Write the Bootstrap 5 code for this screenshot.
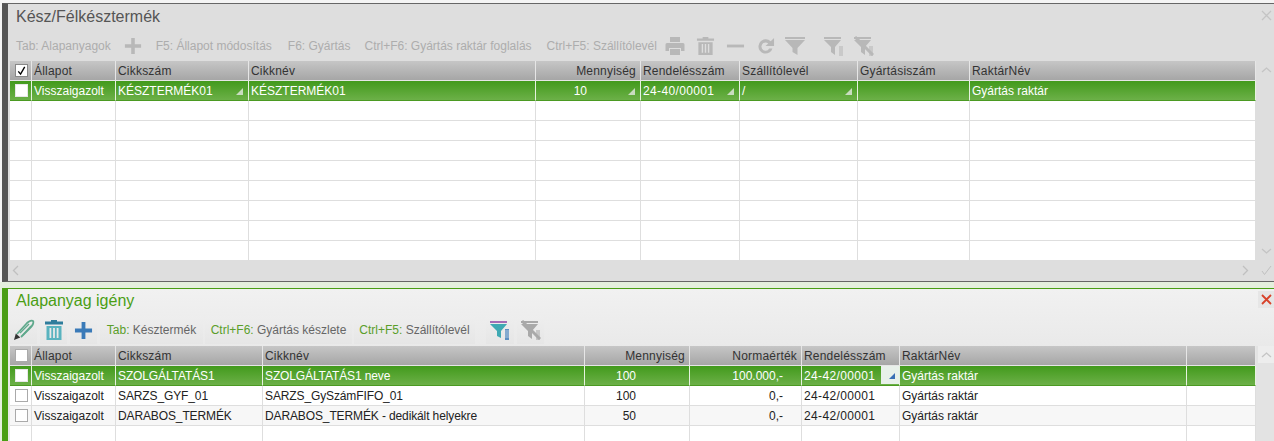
<!DOCTYPE html>
<html lang="hu">
<head>
<meta charset="utf-8">
<title>Gyártás</title>
<link href="https://cdn.jsdelivr.net/npm/bootstrap@5.3.0/dist/css/bootstrap.min.css" rel="stylesheet">
<style>
html,body{height:441px;overflow:hidden}
body{background:#f4f4f4;font-family:"Liberation Sans",Arial,sans-serif;font-size:12px;color:#333;padding-top:3px}
.pane{display:flex;flex-direction:column;margin-left:2px;overflow:hidden}
.pane-top{flex:none;height:279px;background:#dedede;border-top:1px solid #666;border-bottom:1px solid #666;border-left:6px solid #555}
.gap-wrap{background:#e4efdd;padding-top:6px;flex:1 1 auto;min-height:0;display:flex}
.pane-bot{flex:1 1 auto;background:linear-gradient(#f1f1f1,#e9e9e9 60px);border-top:1px solid #4a9e14;border-left:6px solid #4a9e14}
.head-row{flex:none;padding-left:8px;font-size:16px;line-height:18px}
.pane-top .head-row{height:27px;color:#555;padding-top:4px}
.pane-bot .head-row{height:27px;color:#4a9e14;padding-top:3px}
.x-btn{width:16px;height:17px;padding:0;border:0;background:transparent;display:flex;align-items:center;justify-content:center}
.pane-top .x-btn{color:#c4c4c4;margin-top:-1px}
.pane-bot .x-btn{color:#d8432b;background:#e6e6e6;margin-top:-1px}
.bar-top{flex:none;height:30px;padding-left:8px;color:#adadad}
.bar-top>span{white-space:nowrap}
.bar-top svg{flex:none;color:#b8b8b8;fill:#b8b8b8}
.bar-bot{flex:none;height:30px;padding:0 0 2px 2px;color:#666}
.tool{height:28px;padding:0 6px;border:0;border-radius:0;background:linear-gradient(#eeeeee,#e6e6e6);font-size:12px;color:#666;white-space:nowrap;display:flex;align-items:center;justify-content:center}
.tool b{font-weight:400;color:#5a9e2a}
.tool-i{width:27px;padding:0}
.grid-box{display:flex;flex:1 1 auto;min-height:0;padding-left:2px;overflow:hidden}
.grid-wrap{width:1246px;flex:none;overflow:hidden}
.rail{flex:1 1 auto;position:relative;display:flex;flex-direction:column;justify-content:space-between;align-items:center;color:#c4c4c4}
.pane-bot .rail{background:#e3e3e3;justify-content:flex-start}
.rail-up{height:17px;width:16px;display:flex;align-items:center;justify-content:center;margin-left:2px}
.pane-top .rail-up{height:18px}
.pane-bot .rail-up{background:#ededed}
.foot-row{flex:none;height:21px;padding-left:4px;color:#c0c0c0}
.gridt{table-layout:fixed;width:1246px;border-collapse:separate;border-spacing:0;margin:0;font-size:12px}
.gridt>thead>tr>th,.gridt>tbody>tr>td{height:20px;padding:0 2px;line-height:18px;font-weight:400;white-space:nowrap;overflow:hidden;border-width:0 1px 1px 0;border-style:solid;border-color:#dedede;color:#222;background:#fff;box-shadow:none;position:relative;vertical-align:middle}
.gridt>thead>tr>th{background:linear-gradient(#c6c6c6,#a6a6a6);color:#333;border-color:#e6e6e6;letter-spacing:.2px}
.gridt>tbody>tr.sel>td{background:linear-gradient(#429a1c,#6cb048);color:#fff;border-right-color:#e6f2df;border-bottom-color:#4b9a22}
.gridt>tbody>tr.alt>td{background:#f7f7f7}
.gridt>thead>tr>th.cb-c,.gridt>tbody>tr>td.cb-c{padding:0 0 0 5px;line-height:0}
.gridt>thead>tr>th.ra{text-align:right;padding-right:4px}
.gridt>tbody>tr>td.ra{text-align:right;padding-right:53px}
.gridt>tbody>tr>td.rb{text-align:right;padding-right:18px}
.gridt>tbody>tr>td.ordn{letter-spacing:.35px}
.gridt>tbody>tr>td.nm{letter-spacing:-.12px}
.gridt>tbody>tr>td.tri::after{content:"";position:absolute;right:5px;bottom:5px;width:7px;height:7px;background:#c9dcc0;clip-path:polygon(100% 0,100% 100%,0 100%)}
.gridt>tbody>tr>td.trib::before{content:"";position:absolute;right:0;top:0;width:18px;height:18px;background:#e8f0ea}
.gridt>tbody>tr>td.trib::after{content:"";position:absolute;right:4px;bottom:6px;width:6px;height:6px;background:#3a6fb5;clip-path:polygon(100% 0,100% 100%,0 100%)}
input.chk.form-check-input[type=checkbox]{width:13px;height:13px;margin:0;border:1px solid #aaa;border-radius:0;background-color:#fff;vertical-align:middle;float:none}
.sel input.chk.form-check-input[type=checkbox]{border-color:#e8e8e8}
input.chk.form-check-input[type=checkbox]:checked{background-color:#fff;border-color:#888;background-size:11px;background-image:url("data:image/svg+xml,%3csvg xmlns='http://www.w3.org/2000/svg' viewBox='0 0 12 12'%3e%3cpath d='M2.500 7l2.500 3L9.500 2' fill='none' stroke='%23000' stroke-width='1.500'/%3e%3c/svg%3e")}
.plain{display:block}
.m8{margin-right:8px}.m10{margin-right:10px}.m11{margin-right:11px}.m13{margin-right:13px}.m14{margin-right:14px}.m15{margin-right:15px}.m16{margin-right:16px}.m19{margin-right:19px}
</style>
</head>
<body class="d-flex flex-column">
<svg width="0" height="0" class="position-absolute">
<symbol id="i-plus" viewBox="0 0 20 20"><path d="M8 1h4v7h7v4h-7v7H8v-7H1V8h7z"/></symbol>
<symbol id="i-print" viewBox="0 0 20 20"><path d="M5 1h10v5H5zM2 7h16a1.500 1.500 0 0 1 1.500 1.500V15H16v-3H4v3H.5V8.500A1.500 1.500 0 0 1 2 7zM5 13h10v6H5z"/></symbol>
<symbol id="i-trash" viewBox="0 0 20 20"><path fill-rule="evenodd" d="M7 .5h6V2h6v2.500H1V2h6zM2.500 6h15v13.500h-15zM6 8v9h1.500V8zm3.250 0v9h1.500V8zM12.500 8v9H14V8z"/></symbol>
<symbol id="i-minus" viewBox="0 0 20 20"><rect x="1" y="8.500" width="18" height="3"/></symbol>
<symbol id="i-redo" viewBox="0 0 20 20"><path d="M10 3a7.500 7.500 0 1 0 7.300 9.500h-3.400A4.300 4.300 0 1 1 10 6.300c1.100 0 2.100.4 2.900 1.100L10 10h9V1.500L15.500 5A7.500 7.500 0 0 0 10 3z"/></symbol>
<symbol id="i-filter" viewBox="0 0 20 20"><path d="M0 1h20v2H0zM0 4h20l-7.500 8v7l-5-3v-4z"/></symbol>
<symbol id="i-filterl" viewBox="0 0 20 20"><path d="M0 1h17v2H0zM0 4h17l-6 7v8l-4-3v-5z"/><path d="M15 10h4v10h-4z" opacity=".55"/></symbol>
<symbol id="i-filterx" viewBox="0 0 20 20"><path d="M0 1h17v2H0zM0 4h17l-6 7v8l-4-3v-5z"/><path d="M15 10h4v10h-4z" opacity=".55"/><path d="M1 1l18 18" stroke="currentColor" stroke-width="3" fill="none"/></symbol>
</svg>

<section class="pane pane-top">
  <div class="head-row d-flex justify-content-between"><span>Kész/Félkésztermék</span>
    <button class="x-btn" aria-label="Bezárás"><svg width="11" height="11" viewBox="0 0 11 11"><path d="M1 1l9 9M10 1l-9 9" stroke="currentColor" stroke-width="1.300"/></svg></button></div>
  <div class="bar-top d-flex align-items-center">
    <span class="m13">Tab: Alapanyagok</span>
    <svg class="plain m14" width="18" height="18"><use href="#i-plus"/></svg>
    <span class="m16">F5: Állapot módosítás</span><span class="m14">F6: Gyártás</span><span class="m15">Ctrl+F6: Gyártás raktár foglalás</span><span class="m8">Ctrl+F5: Szállítólevél</span>
    <svg class="m11" width="20" height="20"><use href="#i-print"/></svg>
    <svg class="m11" width="19" height="20"><use href="#i-trash"/></svg>
    <svg class="m11" width="19" height="20"><use href="#i-minus"/></svg>
    <svg class="m10" width="19" height="20"><use href="#i-redo"/></svg>
    <svg class="m19" width="20" height="20"><use href="#i-filter"/></svg>
    <svg class="m10" width="20" height="20"><use href="#i-filterl"/></svg>
    <svg width="20" height="20"><use href="#i-filterx"/></svg>
  </div>
  <div class="grid-box">
    <div class="grid-wrap">
      <table class="table gridt">
        <colgroup><col style="width:22px"><col style="width:84px"><col style="width:133px"><col style="width:287px"><col style="width:105px"><col style="width:99px"><col style="width:118px"><col style="width:112px"><col style="width:286px"></colgroup>
        <thead><tr><th class="cb-c"><input class="form-check-input chk" type="checkbox" checked aria-label="Mind"></th><th>Állapot</th><th>Cikkszám</th><th>Cikknév</th><th class="ra">Mennyiség</th><th>Rendelésszám</th><th>Szállítólevél</th><th>Gyártásiszám</th><th>RaktárNév</th></tr></thead>
        <tbody>
          <tr class="sel"><td class="cb-c"><input class="form-check-input chk" type="checkbox" aria-label="Sor"></td><td>Visszaigazolt</td><td class="tri">KÉSZTERMÉK01</td><td>KÉSZTERMÉK01</td><td class="ra tri">10</td><td class="tri ordn">24-40/00001</td><td class="tri">/</td><td></td><td>Gyártás raktár</td></tr>
          <tr><td></td><td></td><td></td><td></td><td></td><td></td><td></td><td></td><td></td></tr>
          <tr><td></td><td></td><td></td><td></td><td></td><td></td><td></td><td></td><td></td></tr>
          <tr><td></td><td></td><td></td><td></td><td></td><td></td><td></td><td></td><td></td></tr>
          <tr><td></td><td></td><td></td><td></td><td></td><td></td><td></td><td></td><td></td></tr>
          <tr><td></td><td></td><td></td><td></td><td></td><td></td><td></td><td></td><td></td></tr>
          <tr><td></td><td></td><td></td><td></td><td></td><td></td><td></td><td></td><td></td></tr>
          <tr><td></td><td></td><td></td><td></td><td></td><td></td><td></td><td></td><td></td></tr>
          <tr><td></td><td></td><td></td><td></td><td></td><td></td><td></td><td></td><td></td></tr>
        </tbody>
      </table>
    </div>
    <div class="rail">
      <div class="rail-up"><svg width="11" height="6" viewBox="0 0 11 6"><path d="M1 5l4.500-4L10 5" fill="none" stroke="currentColor" stroke-width="1.300"/></svg></div>
      <div class="rail-up"><svg width="11" height="6" viewBox="0 0 11 6"><path d="M1 1l4.500 4L10 1" fill="none" stroke="currentColor" stroke-width="1.300"/></svg></div>
    </div>
  </div>
  <div class="foot-row d-flex align-items-center justify-content-between">
    <svg width="7" height="11" viewBox="0 0 7 11"><path d="M6 1L1.500 5.500 6 10" fill="none" stroke="currentColor" stroke-width="1.300"/></svg>
    <div class="d-flex align-items-center" style="gap:12px;margin-right:2px">
      <svg width="7" height="11" viewBox="0 0 7 11"><path d="M1 1l4.500 4.500L1 10" fill="none" stroke="currentColor" stroke-width="1.300"/></svg>
      <svg width="11" height="11" viewBox="0 0 11 11"><path d="M1 6l2.500 3.500L10 1" fill="none" stroke="currentColor" stroke-width="1"/></svg>
    </div>
  </div>
</section>

<div class="gap-wrap">
<section class="pane pane-bot w-100">
  <div class="head-row d-flex justify-content-between"><span>Alapanyag igény</span>
    <button class="x-btn" aria-label="Bezárás"><svg width="11" height="11" viewBox="0 0 11 11"><path d="M1 1l9 9M10 1l-9 9" stroke="currentColor" stroke-width="1.800"/></svg></button></div>
  <div class="bar-bot d-flex" style="gap:3px">
    <button class="btn tool tool-i" aria-label="Szerkesztés"><svg width="22" height="22" viewBox="0 0 22 22"><path d="M4 15L14 4c2-2 5-3 6-2s0 4-2 6L8 18" fill="none" stroke="#5fa98c" stroke-width="1.800"/><path d="M7 14L16 5M10 16l8-9" stroke="#5fa98c" stroke-width="1.400"/><path d="M1 21l1.800-6.500 4.500 4z" fill="#333"/></svg></button>
    <button class="btn tool tool-i" aria-label="Törlés"><svg width="20" height="22" viewBox="0 0 20 22"><path d="M7 1h6v1.500h6v3H1v-3h6z" fill="#2f7d9c"/><path fill-rule="evenodd" d="M2.500 7h15v14h-15zM5.500 9v10h1.800V9zm3.600 0v10h1.800V9zM12.700 9v10h1.800V9z" fill="#59b3bf"/></svg></button>
    <button class="btn tool tool-i" aria-label="Új"><svg width="19" height="19" fill="#3a7ab8"><use href="#i-plus"/></svg></button>
    <button class="btn tool" style="width:103px"><b>Tab:</b>&nbsp;Késztermék</button>
    <button class="btn tool" style="width:147px;margin-left:-1px"><b>Ctrl+F6:</b>&nbsp;Gyártás készlete</button>
    <button class="btn tool" style="width:121px;margin-left:-1px"><b>Ctrl+F5:</b>&nbsp;Szállítólevél</button>
    <button class="btn tool tool-i" style="width:28px;margin-left:8px" aria-label="Szűrő"><svg width="20" height="20" viewBox="0 0 20 20"><rect y="1" width="17" height="2" fill="#a56cb5"/><path d="M0 4h17l-6 7v7l-4-2v-5z" fill="#3fa9b3"/><path d="M15 9h4v11h-4z" fill="#5c8fc0"/><path d="M15 11h4M15 13h4M15 15h4M15 17h4" stroke="#cfdceb" stroke-width=".7"/></svg></button>
    <button class="btn tool tool-i" aria-label="Szűrő törlése"><svg width="20" height="20" fill="#a9a9a9" color="#a9a9a9"><use href="#i-filterx"/></svg></button>
  </div>
  <div class="grid-box">
    <div class="grid-wrap">
      <table class="table gridt">
        <colgroup><col style="width:22px"><col style="width:84px"><col style="width:147px"><col style="width:322px"><col style="width:105px"><col style="width:112px"><col style="width:98px"><col style="width:287px"><col style="width:69px"></colgroup>
        <thead><tr><th class="cb-c"><input class="form-check-input chk" type="checkbox" aria-label="Mind"></th><th>Állapot</th><th>Cikkszám</th><th>Cikknév</th><th class="ra">Mennyiség</th><th class="ra">Normaérték</th><th>Rendelésszám</th><th>RaktárNév</th><th></th></tr></thead>
        <tbody>
          <tr class="sel"><td class="cb-c"><input class="form-check-input chk" type="checkbox" aria-label="Sor"></td><td>Visszaigazolt</td><td class="nm">SZOLGÁLTATÁS1</td><td class="nm">SZOLGÁLTATÁS1 neve</td><td class="ra">100</td><td class="rb">100.000,-</td><td class="trib ordn">24-42/00001</td><td>Gyártás raktár</td><td></td></tr>
          <tr><td class="cb-c"><input class="form-check-input chk" type="checkbox" aria-label="Sor"></td><td>Visszaigazolt</td><td class="nm">SARZS_GYF_01</td><td class="nm">SARZS_GySzámFIFO_01</td><td class="ra">100</td><td class="rb">0,-</td><td class="ordn">24-42/00001</td><td>Gyártás raktár</td><td></td></tr>
          <tr class="alt"><td class="cb-c"><input class="form-check-input chk" type="checkbox" aria-label="Sor"></td><td>Visszaigazolt</td><td class="nm">DARABOS_TERMÉK</td><td class="nm">DARABOS_TERMÉK - dedikált helyekre</td><td class="ra">50</td><td class="rb">0,-</td><td class="ordn">24-42/00001</td><td>Gyártás raktár</td><td></td></tr>
          <tr><td></td><td></td><td></td><td></td><td></td><td></td><td></td><td></td><td></td></tr>
        </tbody>
      </table>
    </div>
    <div class="rail">
      <div class="rail-up"><svg width="11" height="6" viewBox="0 0 11 6"><path d="M1 5l4.500-4L10 5" fill="none" stroke="currentColor" stroke-width="1.300"/></svg></div>
    </div>
  </div>
</section>
</div>
</body>
</html>
